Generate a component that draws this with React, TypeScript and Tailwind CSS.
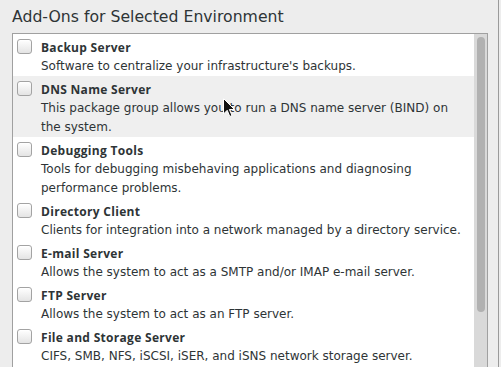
import React from "react";

type Addon = { name: string; desc: string[]; hover?: boolean };

const addons: Addon[] = [
  { name: "Backup Server", desc: ["Software to centralize your infrastructure's backups."] },
  {
    name: "DNS Name Server",
    desc: ["This package group allows you to run a DNS name server (BIND) on", "the system."],
    hover: true,
  },
  {
    name: "Debugging Tools",
    desc: ["Tools for debugging misbehaving applications and diagnosing", "performance problems."],
  },
  { name: "Directory Client", desc: ["Clients for integration into a network managed by a directory service."] },
  { name: "E-mail Server", desc: ["Allows the system to act as a SMTP and/or IMAP e-mail server."] },
  { name: "FTP Server", desc: ["Allows the system to act as an FTP server."] },
  {
    name: "File and Storage Server",
    desc: ["CIFS, SMB, NFS, iSCSI, iSER, and iSNS network storage server."],
  },
];

const Checkbox = () => (
  <div className="mt-[1px] ml-[4px] w-[15px] h-[15px] shrink-0 rounded-[3px] border border-[#a3a3a3] bg-gradient-to-b from-white to-[#e4e4e4] shadow-[inset_0_1px_0_#ffffff]" />
);

const Cursor = () => (
  <svg className="absolute left-[223px] top-[98px]" width="13" height="20" viewBox="0 0 13 20">
    <path d="M0.5 0.5 L0.5 16 L4.2 12.3 L6.8 18.5 L9 17.5 L6.4 11.5 L11.5 11.5 Z" fill="#111" stroke="#fff" strokeWidth="1" />
  </svg>
);

const AddonRow = ({ addon }: { addon: Addon }) => (
  <div className={`flex pt-[4px] ${addon.hover ? "bg-[#efefef]" : "bg-white"}`}>
    <Checkbox />
    <div className="ml-[9px] flex flex-col">
      <p
        className="text-[12px] leading-[19px] font-bold text-[#2e3436] tracking-[0.3px]"
        style={{ fontFamily: '"Open Sans", sans-serif' }}
      >
        {addon.name}
      </p>
      {addon.desc.map((line) => (
        <p key={line} className="text-[12px] leading-[19px] text-[#2e3436] whitespace-nowrap">
          {line}
        </p>
      ))}
    </div>
  </div>
);

export default function App() {
  return (
    <div
      className="relative w-[501px] h-[367px] overflow-hidden bg-[#ededed]"
      style={{ fontFamily: '"DejaVu Sans", sans-serif' }}
    >
      <div className="w-[499px] h-full border-r border-[#9a9a9a] flex flex-col">
        <h2 className="pt-[7px] pl-[12px] mb-[6px] text-[15.7px] leading-[20px] text-[#2e3436]">
          Add-Ons for Selected Environment
        </h2>
        <div className="ml-[12px] w-[476px] flex-1 border border-[#a0a0a0] border-b-0 flex overflow-hidden bg-white">
          <div className="flex-1 flex flex-col">
            {addons.map((a) => (
              <AddonRow key={a.name} addon={a} />
            ))}
            <div className="flex-1 bg-white" />
          </div>
          <div className="w-[13px] bg-[#d9d9d9] pt-[3px] flex justify-center">
            <div className="w-[8px] h-[275px] rounded-full bg-[#b1b1b1]" />
          </div>
        </div>
      </div>
      <Cursor />
    </div>
  );
}
